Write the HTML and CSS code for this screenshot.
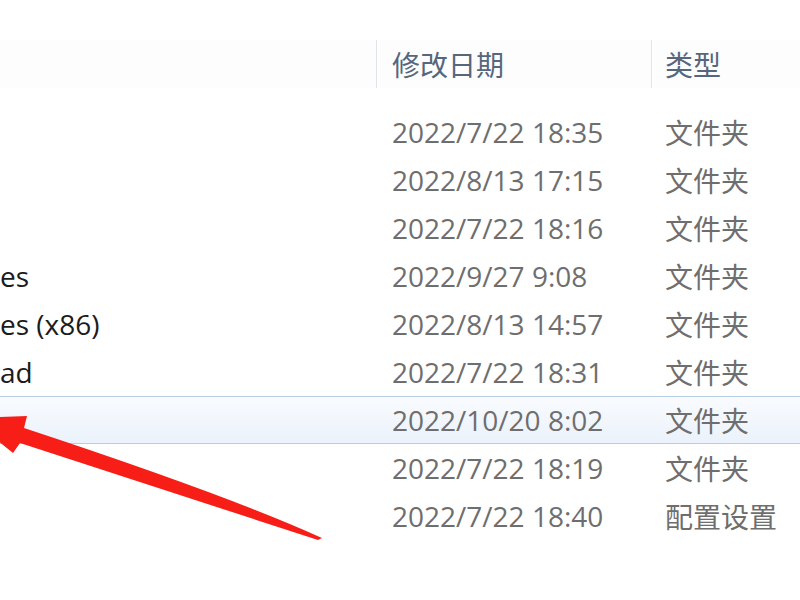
FILE: index.html
```html
<!DOCTYPE html>
<html lang="zh-CN">
<head>
<meta charset="utf-8">
<title>文件列表</title>
<link rel="stylesheet" href="styles.css">
</head>
<body>
<div class="view">
  <div class="header">
    <div class="hcell name"></div>
    <div class="hcell date">修改日期</div>
    <div class="hcell type">类型</div>
  </div>
  <div class="rows">
    <div class="row"><div class="cell name"></div><div class="cell date">2022/7/22 18:35</div><div class="cell type">文件夹</div></div>
    <div class="row"><div class="cell name"></div><div class="cell date">2022/8/13 17:15</div><div class="cell type">文件夹</div></div>
    <div class="row"><div class="cell name"></div><div class="cell date">2022/7/22 18:16</div><div class="cell type">文件夹</div></div>
    <div class="row"><div class="cell name">es</div><div class="cell date">2022/9/27 9:08</div><div class="cell type">文件夹</div></div>
    <div class="row"><div class="cell name">es (x86)</div><div class="cell date">2022/8/13 14:57</div><div class="cell type">文件夹</div></div>
    <div class="row"><div class="cell name">ad</div><div class="cell date">2022/7/22 18:31</div><div class="cell type">文件夹</div></div>
    <div class="row selected"><div class="cell name"></div><div class="cell date">2022/10/20 8:02</div><div class="cell type">文件夹</div></div>
    <div class="row"><div class="cell name"></div><div class="cell date">2022/7/22 18:19</div><div class="cell type">文件夹</div></div>
    <div class="row"><div class="cell name"></div><div class="cell date">2022/7/22 18:40</div><div class="cell type">配置设置</div></div>
  </div>
</div>
<svg class="arrow" width="800" height="600" viewBox="0 0 800 600" aria-hidden="true">
  <path d="M -30 418 L 27 416 L 24 428 Q 230 496 322 538 L 318 540 L 20 443 L 13 453 Z" fill="#f71e17"/>
</svg>
</body>
</html>
```

FILE: styles.css
```css
html, body {
  margin: 0;
  padding: 0;
  background: #ffffff;
}

body {
  width: 800px;
  height: 600px;
  overflow: hidden;
  position: relative;
  font-family: "Open Sans", "Noto Sans CJK SC", sans-serif;
  font-size: 28px;
}

.view {
  padding-top: 40px;
}

.header {
  display: grid;
  grid-template-columns: 376px 275px 1fr;
  height: 48px;
  background: #fdfdfd;
}

.hcell {
  display: flex;
  align-items: center;
  color: #56667c;
}

.hcell.date,
.hcell.type {
  border-left: 1px solid #dfe4ea;
  box-shadow: inset 1px 0 0 #ffffff;
}

.hcell.date {
  padding-left: 15px;
}

.hcell.type {
  padding-left: 13px;
}

.rows {
  margin-top: 20px;
  display: flex;
  flex-direction: column;
}

.row {
  display: grid;
  grid-template-columns: 376px 275px 1fr;
  height: 48px;
  box-sizing: border-box;
  border-top: 1px solid transparent;
  border-bottom: 1px solid transparent;
}

.row.selected {
  border-top-color: #b7cde2;
  border-bottom-color: #b7cde2;
  background: linear-gradient(#f9fbfe, #ebf2fb);
}

.cell {
  display: flex;
  align-items: center;
  white-space: nowrap;
  overflow: hidden;
}

.cell.name {
  color: #1b1b1b;
}

.cell.date {
  padding-left: 16px;
  color: #6e6e6e;
}

.cell.type {
  padding-left: 14px;
  color: #6e6e6e;
}

.arrow {
  position: absolute;
  left: 0;
  top: 0;
  pointer-events: none;
}
```
